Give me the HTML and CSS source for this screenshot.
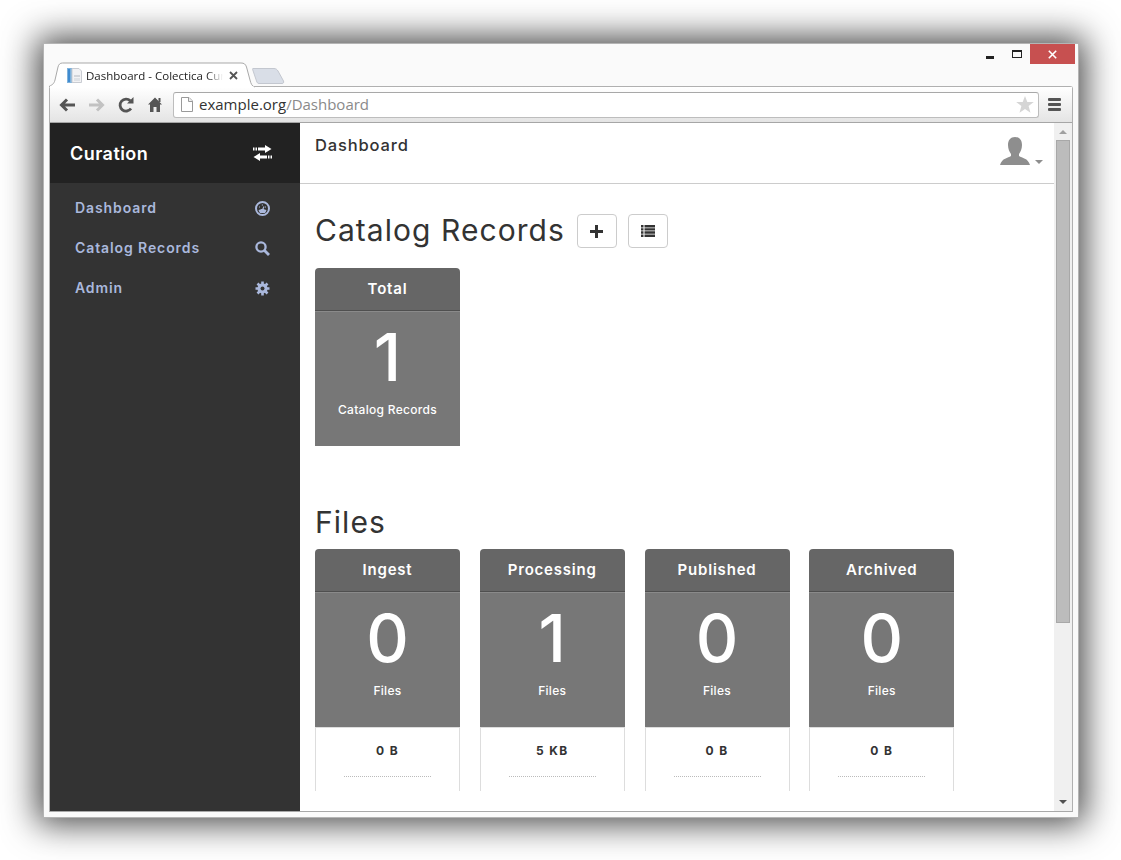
FILE: index.html
```html
<!DOCTYPE html>
<html lang="en">
<head>
<meta charset="utf-8">
<title>Dashboard - Colectica Curation</title>
<link rel="stylesheet" href="styles.css">
</head>
<body>
<div class="window">
  <div class="titlebar">
    <div class="tabstrip">
      <div class="tab">
        <svg class="tab-shape" width="206" height="26" viewBox="0 0 206 26"><path d="M0.500 25V24C3 23 5 22 6 18L9 5C9.600 2.500 11 1 13.500 1H192C195 1 196.500 2 197.500 5L201 18C202 22 203 24 205.500 25" fill="#fff" stroke="#a9a9a9"/><path d="M1 25.500H205" stroke="#fff" stroke-width="2"/></svg>
        <svg class="favicon" width="15" height="15" viewBox="0 0 15 15"><rect x="0" y="0" width="6" height="15" fill="#7fb2dc"/><rect x="1" y="1" width="2" height="13" fill="#3f8bd0"/><path d="M5 0.500H12L14.500 3V14.500H5Z" fill="#f2f2f4" stroke="#c9ccd2"/><rect x="7" y="7" width="6" height="2" fill="#d2d5da"/><rect x="7" y="10" width="6" height="3" fill="#dfe2e6"/></svg>
        <span class="tab-title">Dashboard - Colectica Curation</span>
        <svg class="tab-close" width="9" height="9" viewBox="0 0 9 9"><path d="M1 1L8 8M8 1L1 8" stroke="#555" stroke-width="1.800"/></svg>
      </div>
      <svg class="newtab" width="33" height="18" viewBox="0 0 33 18"><path d="M1 1.500H22C24 1.500 25 2.500 26 4L31.500 14C32 15.500 31.500 16.500 30 16.500H7C5.500 16.500 5 15.500 4.500 14L0.800 3C0.500 2 0.500 1.500 1 1.500Z" fill="#d9dee7" stroke="#c3c7cf"/></svg>
    </div>
    <div class="winctrls">
      <span class="ctrl-min"></span>
      <span class="ctrl-max"></span>
      <span class="ctrl-close"><svg width="9" height="9" viewBox="0 0 9 9"><path d="M0.800 0.800L8.200 8.200M8.200 0.800L0.800 8.200" stroke="#fff" stroke-width="1.600"/></svg></span>
    </div>
  </div>
  <div class="browser">
    <div class="toolbar">
      <svg class="nav nav-back" width="17" height="14" viewBox="0 0 17 14"><path d="M16 7H3.500M8 1.500L2.500 7L8 12.500" fill="none" stroke="#555" stroke-width="3"/></svg>
      <svg class="nav nav-fwd" width="17" height="14" viewBox="0 0 17 14"><path d="M1 7H13.500M9 1.500L14.500 7L9 12.500" fill="none" stroke="#c2c2c2" stroke-width="3"/></svg>
      <svg class="nav nav-reload" width="16" height="16" viewBox="0 0 16 16"><path d="M13 11.500A6 6 0 1 1 12.300 3.800" fill="none" stroke="#555" stroke-width="2.800"/><path d="M9 6.500H15.500V0Z" fill="#555"/></svg>
      <svg class="nav nav-home" width="14" height="15" viewBox="0 0 14 15"><path d="M7 0.500L14 7.500H12V15H8.500V10H5.500V15H2V7.500H0Z" fill="#555"/><rect x="10.500" y="1" width="2" height="4" fill="#555"/></svg>
      <div class="omnibox">
        <svg class="pageicon" width="12" height="15" viewBox="0 0 12 15"><path d="M0.500 0.500H8L11.500 4V14.500H0.500Z" fill="#fff" stroke="#9a9a9a"/><path d="M7.500 0.500V4.500H11.500" fill="#eee" stroke="#9a9a9a"/></svg>
        <span class="url"><span class="host">example.org</span>/Dashboard</span>
        <svg class="star" width="18" height="17" viewBox="0 0 18 17"><path d="M9 0L11.300 6H17.800L12.600 10.100L14.500 16.800L9 13L3.500 16.800L5.400 10.100L0.200 6H6.700Z" fill="#d5d5d5"/></svg>
      </div>
      <div class="menu"><span></span><span></span><span></span></div>
    </div>
    <div class="viewport">
      <aside class="sidebar">
        <div class="side-head">
          <span class="brand">Curation</span>
          <svg width="19" height="16" viewBox="0 0 19 16"><path d="M5 2.500H12V0L18.500 4L12 8V5.500H5ZM0 2.500H1.500V5.500H0ZM2.500 2.500H4V5.500H2.500Z" fill="#fff"/><path d="M14 10.500H7V8L0.500 12L7 16V13.500H14ZM15 10.500H16.500V13.500H15ZM17.500 10.500H19V13.500H17.500Z" fill="#fff"/></svg>
        </div>
        <nav class="side-nav">
          <a class="nav-item"><span>Dashboard</span><svg width="15" height="15" viewBox="0 0 15 15"><circle cx="7.500" cy="7.500" r="6.500" fill="none" stroke="#aab8dc" stroke-width="2"/><path d="M3.500 9.500L5 12H10L11.500 9.500C10.500 8.500 9 8 7.500 8C6 8 4.500 8.500 3.500 9.500Z" fill="#aab8dc"/><path d="M7.500 9L9 5.500" stroke="#aab8dc" stroke-width="1.200"/><path d="M4 6H5M6.800 4H8M10 6H11" stroke="#aab8dc"/></svg></a>
          <a class="nav-item"><span>Catalog Records</span><svg width="15" height="15" viewBox="0 0 15 15"><circle cx="6" cy="6" r="4.600" fill="none" stroke="#aab8dc" stroke-width="2.300"/><path d="M9.500 9.500L14 14" stroke="#aab8dc" stroke-width="2.800"/></svg></a>
          <a class="nav-item"><span>Admin</span><svg width="15" height="15" viewBox="0 0 15 15"><circle cx="7.500" cy="7.500" r="3.600" fill="none" stroke="#aab8dc" stroke-width="3"/><path d="M7.500 0.500V14.500M0.500 7.500H14.500M2.500 2.500L12.500 12.500M12.500 2.500L2.500 12.500" stroke="#aab8dc" stroke-width="2.600"/><circle cx="7.500" cy="7.500" r="2" fill="#333"/></svg></a>
        </nav>
      </aside>
      <main class="main">
        <header class="main-head">
          <span class="page-title">Dashboard</span>
          <div class="user">
            <svg width="30" height="28" viewBox="0 0 30 28"><path d="M15 0C19.500 0 22 3 22 8C22 12 20.500 15 19 17V19C22 21 28 21 30 28H0C2 21 8 21 11 19V17C9.500 15 8 12 8 8C8 3 10.500 0 15 0Z" fill="#8e8e8e"/></svg>
            <span class="caret"></span>
          </div>
        </header>
        <div class="content">
          <section class="records">
            <div class="section-head">
              <h1>Catalog Records</h1>
              <button class="btn"><svg width="13" height="13" viewBox="0 0 13 13"><path d="M6.500 0V13M0 6.500H13" stroke="#333" stroke-width="3"/></svg></button>
              <button class="btn"><svg width="14" height="12" viewBox="0 0 14 12"><path d="M0 0H2.500V2.500H0ZM3.500 0H14V2.500H3.500ZM0 3.200H2.500V5.500H0ZM3.500 3.200H14V5.500H3.500ZM0 6.300H2.500V8.700H0ZM3.500 6.300H14V8.700H3.500ZM0 9.500H2.500V12H0ZM3.500 9.500H14V12H3.500Z" fill="#333"/></svg></button>
            </div>
            <div class="cards">
              <div class="card">
                <div class="card-head">Total</div>
                <div class="card-body"><div class="count">1</div><div class="unit">Catalog Records</div></div>
              </div>
            </div>
          </section>
          <section class="files">
            <h1>Files</h1>
            <div class="cards">
              <div class="card">
                <div class="card-head">Ingest</div>
                <div class="card-body"><div class="count">0</div><div class="unit">Files</div></div>
                <div class="card-foot"><div class="size">0 B</div><div class="dots"></div></div>
              </div>
              <div class="card">
                <div class="card-head">Processing</div>
                <div class="card-body"><div class="count">1</div><div class="unit">Files</div></div>
                <div class="card-foot"><div class="size">5 KB</div><div class="dots"></div></div>
              </div>
              <div class="card">
                <div class="card-head">Published</div>
                <div class="card-body"><div class="count">0</div><div class="unit">Files</div></div>
                <div class="card-foot"><div class="size">0 B</div><div class="dots"></div></div>
              </div>
              <div class="card">
                <div class="card-head">Archived</div>
                <div class="card-body"><div class="count">0</div><div class="unit">Files</div></div>
                <div class="card-foot"><div class="size">0 B</div><div class="dots"></div></div>
              </div>
            </div>
          </section>
        </div>
      </main>
      <div class="scrollbar">
        <span class="arrow-up"></span>
        <span class="thumb"></span>
        <span class="arrow-down"></span>
      </div>
    </div>
  </div>
</div>
</body>
</html>
```
FILE: styles.css
```css
* { box-sizing: border-box; }
html, body { margin: 0; height: 100%; background: #fff; overflow: hidden; }
body { padding: 43px; font-family: "Inter", "Liberation Sans", sans-serif; }

.window {
  width: 1036px;
  height: 775px;
  background: #fafafa;
  border: 1px solid #b4b4b4;
  box-shadow: 0 0 32px 6px rgba(0,0,0,.72);
  display: flex;
  flex-direction: column;
  padding: 0 5px 5px 5px;
}

.titlebar { height: 42px; display: flex; justify-content: space-between; flex: none; }
.tabstrip { display: flex; align-items: flex-start; padding-top: 18px; }
.tab {
  position: relative;
  width: 206px;
  height: 26px;
  display: flex;
  align-items: center;
  padding: 1px 15px 0 18px;
  font: 11.5px "Open Sans", sans-serif;
  color: #222;
  margin-right: -3px;
  z-index: 2;
}
.tab-shape { position: absolute; left: 0; top: 0; }
.favicon { position: relative; flex: none; margin-right: 4px; }
.tab-title {
  position: relative;
  width: 137px;
  white-space: nowrap;
  overflow: hidden;
  -webkit-mask-image: linear-gradient(to right, #000 88%, transparent);
  mask-image: linear-gradient(to right, #000 88%, transparent);
}
.tab-close { position: relative; flex: none; margin-left: 6px; }
.newtab { margin-top: 5px; }

.winctrls { display: flex; align-items: flex-start; margin-right: -2px; }
.ctrl-min { width: 8px; height: 3px; background: #222; margin-top: 12px; margin-right: 18px; }
.ctrl-max { width: 10px; height: 8px; border: 1px solid #222; border-top-width: 2px; margin-top: 6px; margin-right: 8px; }
.ctrl-close { width: 45px; height: 20px; background: #c75050; display: flex; align-items: center; justify-content: center; }

.browser {
  flex: 1;
  min-height: 0;
  display: flex;
  flex-direction: column;
  border: 1px solid #b0b0b0;
  border-radius: 3px 3px 0 0;
  border-bottom: 1px solid #a8a8a8;
}
.toolbar {
  height: 36px;
  flex: none;
  background: linear-gradient(#fff, #e4e4e4);
  border-bottom: 1px solid #a6a6a6;
  display: flex;
  align-items: center;
  padding: 0 11px 0 9px;
}
.nav { flex: none; }
.nav-back { margin-right: 12px; }
.nav-fwd { margin-right: 13px; }
.nav-reload { margin-right: 14px; }
.nav-home { margin-right: 11px; }
.omnibox {
  flex: 1;
  height: 26px;
  background: #fff;
  border: 1px solid #bdbdbd;
  border-top-color: #a8a8a8;
  border-radius: 3px;
  display: flex;
  align-items: center;
  padding: 0 4px 0 7px;
}
.pageicon { flex: none; margin-right: 6px; }
.url { flex: 1; margin-top: -2px; font: 15px "Open Sans", sans-serif; color: #8a8a8a; }
.host { color: #333; }
.menu { width: 13px; margin-left: 9px; display: flex; flex-direction: column; gap: 2px; }
.menu span { height: 3px; background: #555; border-radius: 1px; }

.viewport { flex: 1; min-height: 0; display: flex; background: #fff; }

.sidebar { width: 250px; flex: none; background: #333; }
.side-head {
  height: 60px;
  background: #222;
  display: flex;
  align-items: center;
  justify-content: space-between;
  padding: 0 28px 0 20px;
  color: #fff;
}
.brand { font-size: 18px; font-weight: 600; letter-spacing: .45px; }
.side-nav { padding-top: 5px; }
.nav-item {
  height: 40px;
  display: flex;
  align-items: center;
  justify-content: space-between;
  padding: 0 30px 0 25px;
  color: #aab8dc;
  font-size: 14px;
  font-weight: 600;
  letter-spacing: .9px;
}
.nav-item span { margin-top: -2px; }

.main { flex: 1; min-width: 0; display: flex; flex-direction: column; overflow: hidden; }
.main-head {
  height: 61px;
  flex: none;
  border-bottom: 1px solid #ccc;
  display: flex;
  justify-content: space-between;
  padding: 13px 11px 0 15px;
}
.page-title { font-size: 16.5px; font-weight: 500; color: #333; letter-spacing: .85px; line-height: 19px; }
.user { display: flex; align-items: flex-start; gap: 5px; padding-top: 1px; }
.caret {
  width: 0; height: 0; margin-top: 23px;
  border-left: 4px solid transparent;
  border-right: 4px solid transparent;
  border-top: 4px solid #8e8e8e;
}

.content { flex: none; height: 607px; overflow: hidden; padding: 30px 0 0 15px; }
.section-head { display: flex; align-items: center; gap: 11px; height: 34px; margin-bottom: 20px; }
.section-head h1 { margin: -2px 1px 0 0; }
h1 { margin: 0; font-size: 30px; font-weight: 400; color: #333; letter-spacing: 1.05px; line-height: 34px; }
.btn {
  width: 40px;
  height: 34px;
  padding: 0;
  background: #fff;
  border: 1px solid #ccc;
  border-radius: 4px;
  display: flex;
  align-items: center;
  justify-content: center;
}
.records { margin-bottom: 59px; }
.files h1 { margin-bottom: 10px; height: 34px; }

.cards { display: flex; gap: 19.75px; }
.card { width: 145px; flex: none; }
.card-head {
  height: 43px;
  background: #666;
  border-bottom: 1px solid #4f4f4f;
  border-radius: 4px 4px 0 0;
  color: #fff;
  font-size: 15px;
  font-weight: 600;
  letter-spacing: .8px;
  text-align: center;
  line-height: 41px;
}
.card-body {
  height: 135px;
  background: #777;
  border-top: 1px solid #8a8a8a;
  color: #fff;
  text-align: center;
}
.count { font-size: 66px; font-weight: 500; line-height: 76px; padding-top: 7px; height: 82px; }
.unit { font-size: 12px; font-weight: 500; line-height: 16px; margin-top: 8px; letter-spacing: .3px; }
.card-foot {
  height: 64px;
  background: #fff;
  border: 1px solid #ddd;
  border-bottom: none;
  text-align: center;
}
.size { font-size: 12px; font-weight: 700; color: #333; letter-spacing: 1.3px; line-height: 16px; padding-top: 15px; height: 48px; }
.dots { width: 87px; margin: 0 auto; border-top: 1px dotted #bbb; }

.scrollbar {
  width: 18px;
  flex: none;
  background: #f0f0f0;
  display: flex;
  flex-direction: column;
  align-items: center;
  padding: 7px 0;
}
.arrow-up { width: 0; height: 0; border-left: 4px solid transparent; border-right: 4px solid transparent; border-bottom: 4px solid #a0a0a0; }
.thumb { width: 14px; height: 483px; margin-top: 6px; background: #bcbcbc; border: 1px solid #a8a8a8; }
.arrow-down { width: 0; height: 0; margin-top: auto; border-left: 4px solid transparent; border-right: 4px solid transparent; border-top: 4px solid #505050; }
```
